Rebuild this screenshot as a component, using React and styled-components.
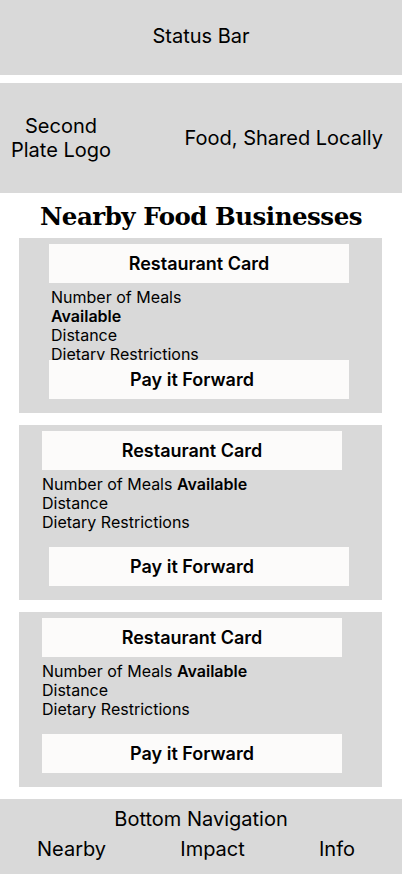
import React from 'react';
import styled, { createGlobalStyle } from 'styled-components';

const restaurants = [
  { id: 1, titleInset: 30, textInset: 32, payInset: 30, textWidth: 160, clipped: true },
  { id: 2, titleInset: 23, textInset: 23, payInset: 30, textWidth: null, clipped: false },
  { id: 3, titleInset: 23, textInset: 23, payInset: 23, textWidth: null, clipped: false },
];

function RestaurantCard({ titleInset, textInset, payInset, textWidth, clipped }) {
  return (
    <Card>
      <CardTitle $inset={titleInset}>Restaurant Card</CardTitle>
      <Details $inset={textInset} $width={textWidth} $clipped={clipped}>
        <div>Number of Meals <strong>Available</strong></div>
        <div>Distance</div>
        <div>Dietary Restrictions</div>
      </Details>
      {/* label stays put at the same x even when the box is nudged right */}
      <PayButton $inset={payInset} $clipped={clipped}>Pay it Forward</PayButton>
    </Card>
  );
}

export default function App() {
  return (
    <>
      <GlobalStyle />
      <Page>
        <StatusBar>Status Bar</StatusBar>
        <Header>
          <Logo>Second<br />Plate Logo</Logo>
          <Tagline>Food, Shared Locally</Tagline>
        </Header>
        <Heading>Nearby Food Businesses</Heading>
        <CardList>
          {restaurants.map((r) => (
            <RestaurantCard key={r.id} {...r} />
          ))}
        </CardList>
        <BottomNav>
          <NavLabel>Bottom Navigation</NavLabel>
          <NavRow>
            <NavItem>Nearby</NavItem>
            <NavItem>Impact</NavItem>
            <NavItem>Info</NavItem>
          </NavRow>
        </BottomNav>
      </Page>
    </>
  );
}

const GlobalStyle = createGlobalStyle`
  * { box-sizing: border-box; }
  body {
    margin: 0;
    background: #ffffff;
    color: #000000;
    font-family: Inter, "Noto Sans", sans-serif;
  }
`;

const Page = styled.div`
  width: 402px;
  height: 874px;
  display: flex;
  flex-direction: column;
  overflow: hidden;
`;

const StatusBar = styled.div`
  height: 75px;
  margin-bottom: 8px;
  padding-bottom: 4px;
  background: #d9d9d9;
  display: flex;
  align-items: center;
  justify-content: center;
  font-size: 20px;
`;

const Header = styled.div`
  height: 110px;
  background: #d9d9d9;
  display: flex;
  align-items: center;
  justify-content: space-between;
  padding: 0 19px 0 10px;
  font-size: 20px;
`;

const Logo = styled.div`
  width: 102px;
  text-align: center;
  line-height: 24px;
`;

const Tagline = styled.div`
  line-height: 24px;
`;

const Heading = styled.h1`
  height: 45px;
  margin: 0;
  display: flex;
  align-items: center;
  justify-content: center;
  font-family: "DejaVu Serif", "Liberation Serif", serif;
  font-size: 24.5px;
  font-weight: 700;
  letter-spacing: -0.5px;
  padding-top: 2px;
`;

const CardList = styled.div`
  display: flex;
  flex-direction: column;
  gap: 12px;
  padding: 0 20px 0 19px;
`;

const Card = styled.div`
  height: 175px;
  background: #d9d9d9;
  display: flex;
  flex-direction: column;
  padding: 6px 0 14px;
`;

const CardTitle = styled.div`
  width: 300px;
  height: 39px;
  margin-left: ${(p) => p.$inset}px;
  background: #fcfbfa;
  display: flex;
  align-items: center;
  justify-content: center;
  font-size: 18px;
  font-weight: 600;
`;

const Details = styled.div`
  margin-top: 5px;
  margin-left: ${(p) => p.$inset}px;
  width: ${(p) => (p.$width ? `${p.$width}px` : 'auto')};
  height: ${(p) => (p.$clipped ? '72px' : 'auto')};
  overflow: hidden;
  font-size: 16px;
  line-height: 19px;

  strong { font-weight: 600; }
`;

const PayButton = styled.div`
  width: 300px;
  height: 39px;
  margin-top: ${(p) => (p.$clipped ? 0 : 15)}px;
  margin-left: ${(p) => p.$inset}px;
  padding-right: ${(p) => (p.$inset - 23) * 2}px;
  background: #fcfbfa;
  display: flex;
  align-items: center;
  justify-content: center;
  font-size: 18px;
  font-weight: 600;
`;

const BottomNav = styled.div`
  margin-top: 12px;
  flex: 1;
  background: #d9d9d9;
  display: flex;
  flex-direction: column;
  align-items: stretch;
  padding-top: 8px;
`;

const NavLabel = styled.div`
  text-align: center;
  font-size: 20px;
  line-height: 24px;
`;

const NavRow = styled.div`
  display: flex;
  justify-content: space-between;
  padding: 0 47px 0 37px;
  margin-top: 6px;
  font-size: 20px;
  line-height: 24px;
`;

const NavItem = styled.div``;
